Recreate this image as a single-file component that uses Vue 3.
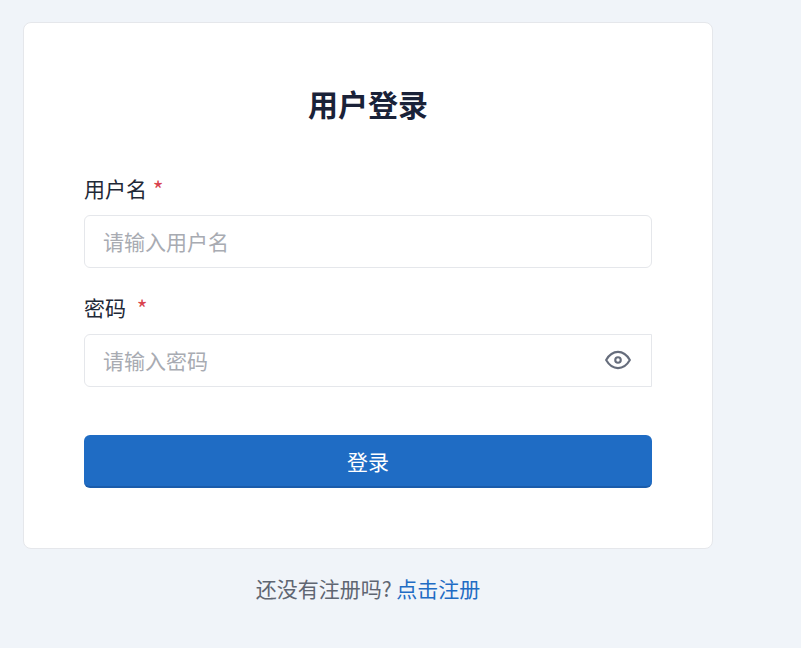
<template>
  <div class="page">
    <div class="card">
      <h2 class="title">用户登录</h2>
      <form class="form" @submit.prevent>
        <div class="field">
          <label class="label">用户名 <span class="req">*</span></label>
          <input class="input" type="text" placeholder="请输入用户名" />
        </div>
        <div class="field">
          <label class="label">密码 <span class="req req-gap">*</span></label>
          <div class="pwd">
            <input class="input pwd-input" type="password" placeholder="请输入密码" />
            <span class="eye">
              <svg width="30" height="30" viewBox="0 0 24 24" fill="none" stroke="#666d7c" stroke-width="1.7">
                <path d="M2.500 12C5 7.700 8.300 5.500 12 5.500s7 2.200 9.500 6.500c-2.500 4.300-5.800 6.500-9.500 6.500s-7-2.200-9.500-6.500z" stroke-linejoin="round" />
                <circle cx="12" cy="12" r="2.200" />
              </svg>
            </span>
          </div>
        </div>
        <button class="submit" type="submit">登录</button>
      </form>
    </div>
    <p class="foot">还没有注册吗? <a class="link">点击注册</a></p>
  </div>
</template>

<script setup>
</script>

<style scoped>
.page {
  width: 690px;
  padding: 22px 0 0 23px;
  font-family: "Noto Sans CJK SC", "Liberation Sans", sans-serif;
}

.card {
  background: #fff;
  border: 1px solid #e5e7eb;
  border-radius: 8px;
  padding: 56px 60px 60px;
  box-sizing: border-box;
  height: 527px;
}

.title {
  margin: 0 0 47px;
  text-align: center;
  font-size: 30px;
  line-height: 48px;
  font-weight: 700;
  color: #1a2238;
}

.field {
  margin-bottom: 25px;
}

.label {
  display: block;
  font-size: 21px;
  line-height: 29px;
  color: #1f2937;
  margin-bottom: 12px;
}

.req {
  margin-left: 1px;
  font-size: 23px;
  line-height: 0;
  vertical-align: -2px;
  color: #d9434e;
}

.req-gap {
  margin-left: 6px;
}

.input {
  display: block;
  width: 100%;
  height: 53px;
  box-sizing: border-box;
  border: 1px solid #e5e7eb;
  border-radius: 6px;
  padding: 0 18px 2px;
  font-family: inherit;
  font-size: 21px;
  outline: none;
}

.input::placeholder {
  color: #a8abb2;
}

.pwd {
  display: flex;
  align-items: center;
  height: 53px;
  border: 1px solid #e5e7eb;
  border-radius: 6px 0 0 6px;
  box-sizing: border-box;
}

.pwd-input {
  flex: 1;
  border: none;
  height: 51px;
  background: transparent;
}

.eye {
  display: flex;
  margin: 0 18px 2px 0;
}

.submit {
  display: block;
  width: 100%;
  height: 53px;
  margin-top: 48px;
  padding: 0;
  border: none;
  border-bottom: 2px solid #1a5cab;
  border-radius: 6px;
  background: #1f6cc4;
  color: #fff;
  font-family: inherit;
  font-size: 21px;
}

.foot {
  margin: 24px 0 0;
  text-align: center;
  font-size: 21px;
  line-height: 30px;
  color: #5f6672;
}

.link {
  color: #1f6cc4;
}
</style>

<style>
body {
  background: #f0f4f9;
}
</style>
